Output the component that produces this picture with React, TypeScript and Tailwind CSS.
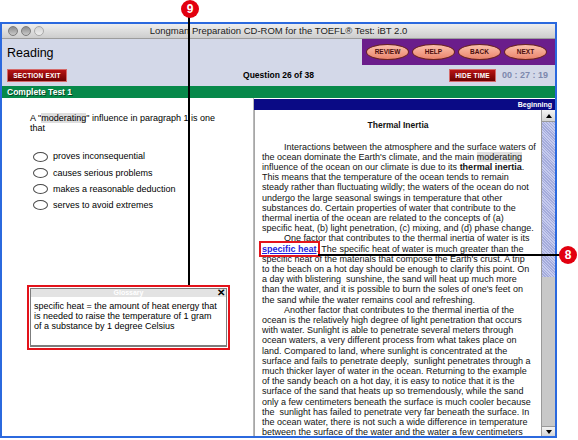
import type { ReactNode } from "react";

type Line = { text: ReactNode; indent?: boolean };

const passage: Line[] = [
  { text: "Interactions between the atmosphere and the surface waters of", indent: true },
  {
    text: (
      <>
        the ocean dominate the Earth's climate, and the main <span className="bg-[#dedede]">moderating</span>
      </>
    ),
  },
  {
    text: (
      <>
        influence of the ocean on our climate is due to its <b>thermal inertia</b>.
      </>
    ),
  },
  { text: "This means that the temperature of the ocean tends to remain" },
  { text: "steady rather than fluctuating wildly; the waters of the ocean do not" },
  { text: "undergo the large seasonal swings in temperature that other" },
  { text: "substances do. Certain properties of water that contribute to the" },
  { text: "thermal inertia of the ocean are related to the concepts of (a)" },
  { text: "specific heat, (b) light penetration, (c) mixing, and (d) phase change." },
  { text: "One factor that contributes to the thermal inertia of water is its", indent: true },
  {
    text: (
      <>
        <span className="font-bold text-[#1d1de0] underline outline-2 outline-offset-1 outline-[#e5141b]">
          specific heat
        </span>
        . The specific heat of water is much greater than the
      </>
    ),
  },
  { text: "specific heat of the materials that compose the Earth's crust. A trip" },
  { text: "to the beach on a hot day should be enough to clarify this point. On" },
  { text: "a day with blistering  sunshine, the sand will heat up much more" },
  { text: "than the water, and it is possible to burn the soles of one's feet on" },
  { text: "the sand while the water remains cool and refreshing." },
  { text: "Another factor that contributes to the thermal inertia of the", indent: true },
  { text: "ocean is the relatively high degree of light penetration that occurs" },
  { text: "with water. Sunlight is able to penetrate several meters through" },
  { text: "ocean waters, a very different process from what takes place on" },
  { text: "land. Compared to land, where sunlight is concentrated at the" },
  { text: "surface and fails to penetrate deeply,  sunlight penetrates through a" },
  { text: "much thicker layer of water in the ocean. Returning to the example" },
  { text: "of the sandy beach on a hot day, it is easy to notice that it is the" },
  { text: "surface of the sand that heats up so tremendously, while the sand" },
  { text: "only a few centimeters beneath the surface is much cooler because" },
  { text: "the  sunlight has failed to penetrate very far beneath the surface. In" },
  { text: "the ocean water, there is not such a wide difference in temperature" },
  { text: "between the surface of the water and the water a few centimeters" },
];

const options = [
  "proves inconsequential",
  "causes serious problems",
  "makes a reasonable deduction",
  "serves to avoid extremes",
];

function TitleBar() {
  return (
    <div className="grid h-[15px] grid-cols-[1fr_auto_1fr] items-center border-b border-[#9c9c9c] bg-gradient-to-b from-[#eeeeee] to-[#cdcdcd]">
      <div className="flex items-center gap-[3px] pl-[6px]">
        <span className="h-[10px] w-[10px] rounded-full border border-[#7c7c7c] bg-gradient-to-b from-[#8d8d8d] to-[#c9c9c9]" />
        <span className="h-[10px] w-[10px] rounded-full border border-[#7c7c7c] bg-gradient-to-b from-[#8d8d8d] to-[#c9c9c9]" />
        <span className="h-[10px] w-[10px] rounded-full border border-[#a9a9a9] bg-gradient-to-b from-[#d2d2d2] to-[#eeeeee]" />
      </div>
      <div className="text-[9.5px] leading-none text-[#222]">
        Longman Preparation CD-ROM for the TOEFL® Test: iBT 2.0
      </div>
      <div />
    </div>
  );
}

function PillButton({ label }: { label: string }) {
  return (
    <div className="flex h-[16px] w-[43px] items-center justify-center rounded-[50%] border border-[#6b2424] bg-gradient-to-b from-[#fbc0ab] to-[#e9846c] text-[6.5px] font-bold text-[#4a0e0e]">
      {label}
    </div>
  );
}

function RedButton({ label, width }: { label: string; width: string }) {
  return (
    <div
      className={`flex h-[13px] ${width} items-center justify-center border border-[#d46a6a] bg-gradient-to-b from-[#b81515] to-[#6e0202] text-[6.5px] font-bold tracking-[0.2px] text-white`}
    >
      {label}
    </div>
  );
}

function Header() {
  return (
    <div className="bg-[#d3d8e8]">
      <div className="flex h-[26px] items-stretch justify-between">
        <div className="flex items-center pl-[5px] pt-[3px] text-[12.5px] text-black">Reading</div>
        <div className="flex w-[193px] items-center gap-[3px] bg-[#6b1d8b] pl-[4px]">
          {["REVIEW", "HELP", "BACK", "NEXT"].map((b) => (
            <PillButton key={b} label={b} />
          ))}
        </div>
      </div>
      <div className="grid h-[21px] grid-cols-[1fr_auto_1fr] items-center px-[5px]">
        <RedButton label="SECTION EXIT" width="w-[60px]" />
        <div className="text-[8.5px] font-bold">Question 26 of 38</div>
        <div className="flex items-center justify-end gap-[6px] pr-[2px]">
          <RedButton label="HIDE TIME" width="w-[47px]" />
          <span className="text-[9px] font-bold text-[#7d88ad]">00 : 27 : 19</span>
        </div>
      </div>
    </div>
  );
}

function LeftPane() {
  return (
    <div className="flex w-[252px] flex-col border-r border-[#b9b9b9] bg-white text-[9px] leading-[10.2px]">
      <div className="ml-[28px] mt-[15px] w-[200px]">
        A "<span className="bg-[#dedede]">moderating</span>" influence in paragraph 1 is one that
      </div>
      <div className="ml-[31px] mt-[15px] flex flex-col">
        {options.map((o) => (
          <div key={o} className="flex h-[16.3px] items-center gap-[5px]">
            <span className="h-[10px] w-[15px] rounded-[50%] border border-[#4a4a4a] bg-white" />
            <span>{o}</span>
          </div>
        ))}
      </div>
      <div className="ml-[25px] mt-[71px] w-[203px] border-2 border-[#e3121a] p-[1px]">
        <div className="h-[59px] border border-[#7d7d7d] border-b-2 bg-white">
          <div className="relative flex h-[8px] items-center justify-center bg-[#e3e3e3] text-[7px] font-bold leading-none text-white">
            Glossary
            <span className="absolute right-[1px] top-[-1px] text-[10px] font-bold leading-none text-black">✕</span>
          </div>
          <div className="mt-[4px] pl-[3px]">
            specific heat = the amount of heat energy that
            <br />
            is needed to raise the temperature of 1 gram
            <br />
            of a substance by 1 degree Celsius
          </div>
        </div>
      </div>
    </div>
  );
}

function Scrollbar() {
  return (
    <div className="flex w-[14px] flex-col border-l border-[#9a9a9a] bg-[#c8c8c8]">
      <div className="flex h-[12px] items-center justify-center border-b border-[#999] bg-gradient-to-b from-[#f4f4f4] to-[#d4d4d4]">
        <span className="h-0 w-0 border-x-[3px] border-b-[4px] border-x-transparent border-b-black" />
      </div>
      <div className="h-[155px] bg-[repeating-linear-gradient(45deg,#a4abdb_0px,#a4abdb_1px,#c6cbee_1px,#c6cbee_2px)]" />
      <div className="flex-1" />
      <div className="flex h-[10px] items-center justify-center border-t border-[#999] bg-gradient-to-b from-[#f4f4f4] to-[#d4d4d4]">
        <span className="h-0 w-0 border-x-[3px] border-t-[4px] border-x-transparent border-t-black" />
      </div>
    </div>
  );
}

function RightPane() {
  return (
    <div className="flex min-w-0 flex-1 flex-col">
      <div className="mt-[1px] flex h-[11px] items-center justify-end bg-[#0a0a85] pr-[3px] text-[7px] font-bold leading-none text-white">
        Beginning
      </div>
      <div className="flex min-h-0 flex-1">
        <div className="min-w-0 flex-1 overflow-hidden border-l border-[#a7a7a7] bg-white text-[9px] leading-[10.2px] text-[#111]">
          <div className="pt-[10px] text-center text-[8.5px] font-bold leading-[10px]">Thermal Inertia</div>
          <div className="mt-[11.5px] pl-[7px]">
            {passage.map((l, i) => (
              <div key={i} className={`whitespace-pre ${l.indent ? "pl-[22px]" : ""}`}>
                {l.text}
              </div>
            ))}
          </div>
        </div>
        <Scrollbar />
      </div>
    </div>
  );
}

function Callout({ n, pos }: { n: string; pos: string }) {
  return (
    <div
      className={`absolute ${pos} flex h-[18px] w-[18px] items-center justify-center rounded-full bg-[#e2000f] text-[12px] font-bold leading-none text-white`}
    >
      {n}
    </div>
  );
}

export default function App() {
  return (
    <div className="relative h-[440px] w-[578px] overflow-hidden bg-white pt-[22px] font-['Liberation_Sans',Arial,sans-serif] text-black">
      <div className="flex h-[416px] w-[557px] flex-col overflow-hidden border-2 border-[#2b69de]">
        <TitleBar />
        <Header />
        <div className="flex h-[12px] items-center bg-[#07894a] pl-[5px] text-[8.5px] font-bold leading-none text-white [text-shadow:1px_1px_0_#03441f]">
          Complete Test 1
        </div>
        <div className="flex min-h-0 flex-1">
          <LeftPane />
          <RightPane />
        </div>
      </div>

      <div className="absolute left-[188px] top-[10px] h-[275px] w-[2px] bg-black" />
      <Callout n="9" pos="left-[181px] top-0" />
      <div className="absolute left-[318px] top-[254px] h-[2px] w-[243px] bg-black" />
      <Callout n="8" pos="left-[559px] top-[246px]" />
    </div>
  );
}
